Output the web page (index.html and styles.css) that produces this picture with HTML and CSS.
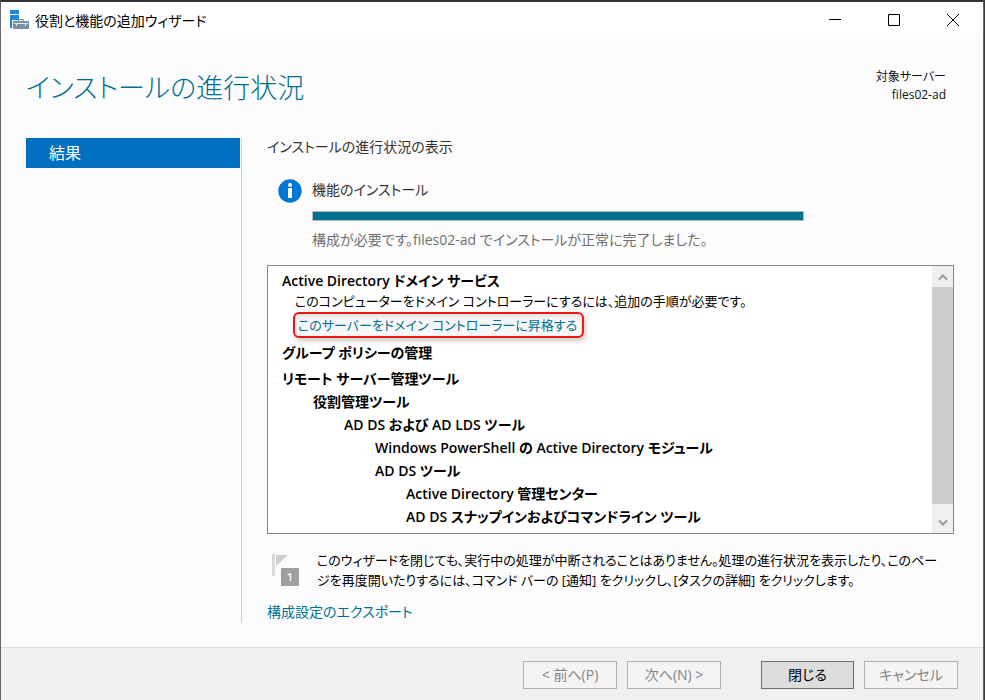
FILE: index.html
```
<!DOCTYPE html>
<html lang="ja">

<head>
    <meta charset="utf-8">
    <title>役割と機能の追加ウィザード</title>
    <link rel="stylesheet" href="styles.css">
</head>

<body>
    <div class="window">
        <header class="titlebar">
            <svg class="app-icon" width="21" height="21" viewBox="0 0 21 21">
                <path fill="#1e88dc" d="M1 0h9v4H1zM1 5h9v13H1z" />
                <path fill="#fff" d="M3 10h18v10H3z" />
                <path fill="none" stroke="#7892a4" d="M9.500 11V9.500h5V11" />
                <path fill="#7892a4" d="M4 11h16v8H4z" />
                <path stroke="#e4ebf0" d="M5 13.500h14M7.500 13v3M16.500 13v3" />
            </svg>
            <span class="caption">役割と機能の追加ウィザード</span>
            <div class="window-controls">
                <button type="button" aria-label="最小化">
                    <svg width="12" height="12" viewBox="0 0 12 12"><path d="M0 5.500h12" /></svg>
                </button>
                <button type="button" aria-label="最大化">
                    <svg width="12" height="12" viewBox="0 0 12 12"><path d="M.5.500h11v11H.5z" /></svg>
                </button>
                <button type="button" aria-label="閉じる">
                    <svg width="12" height="12" viewBox="0 0 12 12"><path d="M0 0l12 12M12 0L0 12" /></svg>
                </button>
            </div>
        </header>

        <div class="page-header">
            <h1>インストールの進行状況</h1>
            <div class="target">対象サーバー<br>files02-ad</div>
        </div>

        <div class="layout">
            <nav class="steps">
                <a href="#" class="step active">結果</a>
            </nav>
            <main class="content">
                <p class="intro">インストールの進行状況の表示</p>

                <div class="status">
                    <svg class="info-icon" width="24" height="24" viewBox="0 0 24 24">
                        <circle cx="12" cy="12" r="11.700" fill="#0078d4" />
                        <path fill="#fff" d="M10 9h4v10h-4z" />
                        <circle cx="12" cy="6" r="2" fill="#fff" />
                    </svg>
                    <div class="status-body">
                        <p class="status-title">機能のインストール</p>
                        <div class="progress" role="progressbar" aria-label="機能のインストール" aria-valuenow="100">
                            <div class="bar" style="width: 100%"></div>
                        </div>
                        <p class="status-text">構成が必要です。files02-ad でインストールが正常に完了しました。</p>
                    </div>
                </div>

                <div class="results">
                    <div class="results-list">
                        <div class="feature">Active Directory ドメイン サービス</div>
                        <p class="note">このコンピューターをドメイン コントローラーにするには、追加の手順が必要です。</p>
                        <a href="#" class="promote">このサーバーをドメイン コントローラーに昇格する</a>
                        <div class="feature">グループ ポリシーの管理</div>
                        <ul class="tree">
                            <li>リモート サーバー管理ツール
                                <ul>
                                    <li>役割管理ツール
                                        <ul>
                                            <li>AD DS および AD LDS ツール
                                                <ul>
                                                    <li>Windows PowerShell の Active Directory モジュール</li>
                                                    <li>AD DS ツール
                                                        <ul>
                                                            <li>Active Directory 管理センター</li>
                                                            <li>AD DS スナップインおよびコマンドライン ツール</li>
                                                        </ul>
                                                    </li>
                                                </ul>
                                            </li>
                                        </ul>
                                    </li>
                                </ul>
                            </li>
                        </ul>
                    </div>
                    <div class="scrollbar">
                        <button type="button" aria-label="上へ">
                            <svg width="10" height="6" viewBox="0 0 10 6"><path d="M1 5.500l4-4 4 4" /></svg>
                        </button>
                        <div class="thumb"></div>
                        <button type="button" aria-label="下へ">
                            <svg width="10" height="6" viewBox="0 0 10 6"><path d="M1 .5l4 4 4-4" /></svg>
                        </button>
                    </div>
                </div>

                <div class="hint">
                    <div class="flag">
                        <svg width="17" height="24" viewBox="0 0 17 24">
                            <path fill="#d8d8d8" d="M0 0h3v22H0z" />
                            <path fill="#cfcfcf" d="M4 1h12L4 12z" />
                        </svg>
                        <span class="count">1</span>
                    </div>
                    <p>このウィザードを閉じても、実行中の処理が中断されることはありません。処理の進行状況を表示したり、このペー<br>ジを再度開いたりするには、コマンド バーの [通知] をクリックし、[タスクの詳細] をクリックします。</p>
                </div>
                <a href="#" class="export">構成設定のエクスポート</a>
            </main>
        </div>

        <footer class="footer">
            <button type="button" class="btn" disabled>&lt; 前へ(P)</button>
            <button type="button" class="btn" disabled>次へ(N) &gt;</button>
            <button type="button" class="btn close">閉じる</button>
            <button type="button" class="btn" disabled>キャンセル</button>
        </footer>
    </div>
</body>

</html>
```
FILE: styles.css
```
* {
    box-sizing: border-box;
}

body {
    margin: 0;
    background: #3c3c3c;
    color: #111;
    font-family: "Open Sans", "Noto Sans CJK JP", sans-serif;
    font-size: 14px;
    line-height: 20px;
    /* proportional kana, like the system UI font */
    font-feature-settings: "palt";
}

h1,
p,
ul {
    margin: 0;
    padding: 0;
}

a {
    color: #00708f;
    text-decoration: none;
}

.window {
    display: flex;
    flex-direction: column;
    min-height: 100vh;
    margin-right: 1px;
    border: 1px solid #666;
    border-top: 2px solid #333;
    border-bottom: 0;
    background: #fcfcfc;
}

.titlebar {
    display: flex;
    align-items: center;
    height: 37px;
    padding: 0 1px 0 8px;
    background: #fff;
}

.caption {
    margin-left: 5px;
    color: #000;
}

.window-controls {
    display: flex;
    align-self: stretch;
    margin-left: auto;
}

.window-controls button {
    display: flex;
    align-items: center;
    justify-content: center;
    width: 59px;
    padding: 0 0 1px;
    border: 0;
    background: none;
}

.window-controls svg {
    fill: none;
    stroke: #000;
}

.page-header {
    display: flex;
    justify-content: space-between;
    height: 99px;
    padding: 29px 37px 0 25px;
}

h1 {
    color: #00708f;
    font-size: 27px;
    font-weight: 300;
    line-height: 40px;
}

.target {
    font-size: 12px;
    line-height: 18px;
    text-align: right;
}

.layout {
    display: flex;
    flex: 1;
    padding: 0 24px 24px 25px;
}

.steps {
    flex: none;
    width: 216px;
    padding-right: 1px;
    border-right: 1px solid #ccc;
}

.step {
    display: block;
    padding: 0 23px;
    font-size: 16px;
    line-height: 30px;
}

.step.active {
    background: #0070c0;
    color: #fff;
}

.content {
    flex: 1;
    padding-left: 25px;
}

.intro,
.status {
    color: #333;
}

.intro {
    line-height: 18px;
}

.status {
    display: flex;
    gap: 10px;
    margin: 23px 0 15px;
    padding: 0 155px 0 11px;
}

.info-icon {
    flex: none;
}

.status-body {
    flex: 1;
}

.status-title {
    line-height: 22px;
}

.progress {
    height: 10px;
    margin: 10px 0 9px;
    border: 1px solid #bbb;
    background: #e6e6e6;
}

.bar {
    height: 100%;
    background: #00708f;
}

.status-text {
    color: #707070;
}

.results {
    display: flex;
    height: 269px;
    margin-right: 5px;
    border: 1px solid #828790;
    background: #fff;
}

.results-list {
    flex: 1;
    padding: 5px 14px 0;
    overflow: hidden;
    color: #000;
}

.feature,
.tree {
    font-weight: 600;
}

.note,
.promote,
.hint {
    font-size: 13px;
}

.note {
    padding-left: 13px;
}

.promote {
    display: block;
    width: fit-content;
    margin: 1px 0 5px 11px;
    padding: 0 5px 0 3px;
    border: 2px solid #f01414;
    border-radius: 6px;
    background: #f7f7f7;
    box-shadow: 2px 3px 5px #ccc, inset 0 2px 4px #ddd;
    line-height: 22px;
}

.tree {
    margin-top: 4px;
    line-height: 23px;
    list-style: none;
}

.tree ul {
    padding-left: 31px;
    list-style: none;
}

.scrollbar {
    display: flex;
    flex-direction: column;
    width: 21px;
    background: #f0f0f0;
}

.scrollbar button {
    height: 21px;
    padding: 0;
    border: 0;
    background: none;
    line-height: 0;
}

.scrollbar svg {
    fill: none;
    stroke: #999;
    stroke-width: 2;
}

.thumb {
    flex: 1;
    margin-bottom: 8px;
    background: #cdcdcd;
}

.hint {
    display: flex;
    gap: 18px;
    margin: 16px 0 12px;
    padding-left: 5px;
    color: #000;
}

.flag {
    position: relative;
    flex: none;
    width: 27px;
    height: 36px;
    padding-top: 4px;
}

.flag svg {
    display: block;
}

.count {
    position: absolute;
    right: 0;
    bottom: 0;
    width: 18px;
    background: #a09ea0;
    color: #fff;
    font-size: 11px;
    font-weight: 600;
    line-height: 18px;
    text-align: center;
}

.footer {
    display: flex;
    justify-content: flex-end;
    gap: 10px;
    padding: 13px 25px 11px;
    border-top: 1px solid #dfdfdf;
    background: #f0f0f0;
}

.btn {
    width: 94px;
    height: 28px;
    padding: 0;
    border: 1px solid #adb2b5;
    background: #f4f4f4;
    color: #838383;
    font: inherit;
    font-feature-settings: inherit;
}

.btn.close {
    width: 93px;
    margin-left: 30px;
    border-color: #707070;
    background: #ddd;
    color: #000;
}
```
